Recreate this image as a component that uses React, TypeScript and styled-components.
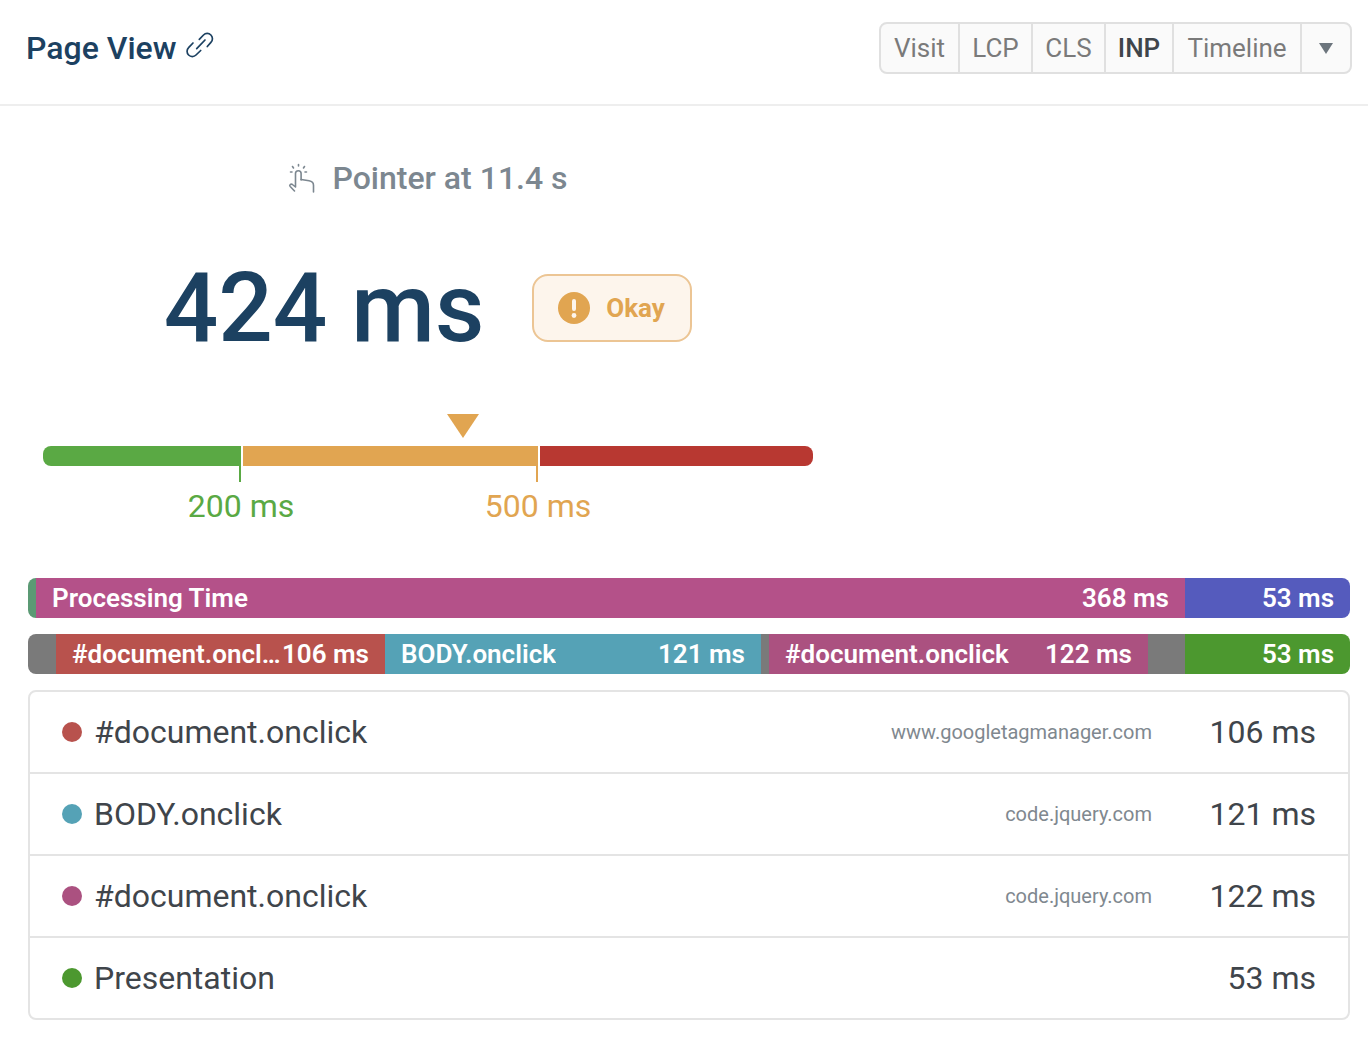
import React from "react";
import styled, { createGlobalStyle } from "styled-components";

const Global = createGlobalStyle`
  html, body { margin: 0; padding: 0; background: #fff; }
  body { font-family: Roboto, "Liberation Sans", sans-serif; -webkit-font-smoothing: antialiased; }
  * { box-sizing: border-box; }
`;

const Page = styled.div`
  width: 1368px;
  height: 1050px;
  background: #fff;
  overflow: hidden;
`;

const Header = styled.header`
  height: 106px;
  border-bottom: 2px solid #eeeeee;
  display: flex;
  align-items: center;
  justify-content: space-between;
  padding: 0 16px 8px 26px;
`;

const Title = styled.h1`
  margin: 0;
  display: flex;
  align-items: center;
  gap: 10px;
  font-size: 32px;
  font-weight: 500;
  line-height: 40px;
  color: #1c4161;
`;

const LinkIcon = styled.svg`
  width: 28px;
  height: 28px;
  margin-top: -6px;
  fill: none;
  stroke: #1c4161;
  stroke-width: 1.7;
  stroke-linecap: round;
  stroke-linejoin: round;
`;

const TabGroup = styled.div`
  display: flex;
  height: 52px;
  border: 2px solid #e0e0e0;
  border-radius: 8px;
  background: #fafafa;
`;

const Tab = styled.div<{ $active?: boolean; $width: number }>`
  width: ${(p) => p.$width}px;
  display: flex;
  align-items: center;
  justify-content: center;
  font-size: 26px;
  font-weight: ${(p) => (p.$active ? 500 : 400)};
  color: ${(p) => (p.$active ? "#3f454b" : "#7a7a7a")};
  border-right: 2px solid #e0e0e0;
  &:last-child { border-right: 0; }
`;

const Caret = styled.span`
  width: 0;
  height: 0;
  border-left: 7px solid transparent;
  border-right: 7px solid transparent;
  border-top: 11px solid #6c757d;
`;

const Summary = styled.section`
  width: 770px;
  margin-left: 43px;
  display: flex;
  flex-direction: column;
  align-items: center;
  padding-top: 52px;
`;

const Trigger = styled.div`
  display: flex;
  align-items: center;
  gap: 16px;
  height: 40px;
  font-size: 32px;
  font-weight: 500;
  color: #7c8790;
`;

const PointerIcon = styled.svg`
  width: 28px;
  height: 30px;
  fill: none;
  stroke: #7c8790;
  stroke-width: 1.6;
  stroke-linecap: round;
  stroke-linejoin: round;
`;

const ValueRow = styled.div`
  display: flex;
  align-items: center;
  gap: 48px;
  height: 96px;
  margin-top: 62px;
`;

const Value = styled.div`
  font-size: 96px;
  font-weight: 500;
  line-height: 96px;
  color: #1c4161;
`;

const Badge = styled.div`
  width: 160px;
  height: 68px;
  display: flex;
  align-items: center;
  gap: 16px;
  padding-left: 24px;
  border: 2px solid #ecc594;
  border-radius: 16px;
  background: #fdf5ec;
  font-size: 26px;
  font-weight: 700;
  color: #e1a551;
`;

const BadgeIcon = styled.svg`
  width: 32px;
  height: 32px;
  flex: none;
`;

const ScaleBlock = styled.div`
  width: 770px;
  margin-top: 58px;
`;

const Marker = styled.div`
  width: 0;
  height: 0;
  border-left: 16px solid transparent;
  border-right: 16px solid transparent;
  border-top: 24px solid #e1a551;
`;

const Scale = styled.div`
  display: flex;
  gap: 2px;
  height: 20px;
  margin-top: 8px;
  border-radius: 8px;
`;

const Zone = styled.div<{ $color: string; $width: number }>`
  position: relative;
  flex: ${(p) => (p.$width ? `0 0 ${p.$width}px` : "1")};
  background: ${(p) => p.$color};
  &:first-child { border-radius: 8px 0 0 8px; }
  &:last-child { border-radius: 0 8px 8px 0; }
`;

const Threshold = styled.div<{ $color: string }>`
  position: absolute;
  top: 100%;
  right: 0;
  width: 2px;
  height: 16px;
  background: ${(p) => p.$color};
`;

const ThresholdLabel = styled.div<{ $color: string }>`
  position: absolute;
  top: 40px;
  right: 0;
  transform: translateX(50%);
  font-size: 32px;
  line-height: 40px;
  white-space: nowrap;
  color: ${(p) => p.$color};
`;

const Bars = styled.section`
  margin: 112px 18px 0 28px;
  display: flex;
  flex-direction: column;
  gap: 16px;
`;

const Bar = styled.div`
  display: flex;
  height: 40px;
  border-radius: 8px;
  overflow: hidden;
`;

const Segment = styled.div<{ $color: string; $width: number }>`
  flex: 0 0 ${(p) => p.$width}px;
  min-width: 0;
  display: flex;
  align-items: center;
  justify-content: space-between;
  padding: ${(p) => (p.$width > 40 ? "0 16px" : "0")};
  background: ${(p) => p.$color};
  color: #fff;
  font-size: 26px;
  font-weight: 600;
  white-space: nowrap;
`;

const SegmentName = styled.span`
  min-width: 0;
  overflow: hidden;
  text-overflow: ellipsis;
`;

const SegmentTime = styled.span`
  margin-left: auto;
  flex: none;
`;

const Table = styled.div`
  margin: 16px 18px 0 28px;
  border: 2px solid #e4e4e4;
  border-radius: 8px;
`;

const Row = styled.div`
  height: 82px;
  display: flex;
  align-items: center;
  padding: 0 32px;
  border-bottom: 2px solid #e4e4e4;
  font-size: 32px;
  color: #3f454b;
  &:last-child { border-bottom: 0; height: 80px; }
`;

const Dot = styled.span<{ $color: string }>`
  width: 20px;
  height: 20px;
  border-radius: 50%;
  margin-right: 12px;
  flex: none;
  background: ${(p) => p.$color};
`;

const Name = styled.span`
  flex: 1;
`;

const Domain = styled.span`
  font-size: 20px;
  color: #80888f;
`;

const Time = styled.span`
  width: 164px;
  text-align: right;
`;

const segments1 = [
  { color: "#5b9a74", width: 8 },
  { color: "#b45189", width: 1149, name: "Processing Time", time: "368 ms" },
  { color: "#555bbd", width: 165, time: "53 ms" },
];

const segments2 = [
  { color: "#7a7a7a", width: 28 },
  { color: "#b8524d", width: 329, name: "#document.onclick", time: "106 ms" },
  { color: "#55a2b6", width: 376, name: "BODY.onclick", time: "121 ms" },
  { color: "#7a7a7a", width: 8 },
  { color: "#ab5180", width: 379, name: "#document.onclick", time: "122 ms" },
  { color: "#7a7a7a", width: 37 },
  { color: "#4c982f", width: 165, time: "53 ms" },
];

const rows = [
  { color: "#b8524d", name: "#document.onclick", domain: "www.googletagmanager.com", time: "106 ms" },
  { color: "#55a2b6", name: "BODY.onclick", domain: "code.jquery.com", time: "121 ms" },
  { color: "#ab5180", name: "#document.onclick", domain: "code.jquery.com", time: "122 ms" },
  { color: "#4c982f", name: "Presentation", domain: "", time: "53 ms" },
];

export default function App() {
  return (
    <Page>
      <Global />
      <Header>
        <Title>
          Page View
          <LinkIcon viewBox="0 0 28 28">
            <path d="M10.7 17.7L19 9" />
            <path d="M13.3 8.3L17.5 4a5.2 5.2 0 0 1 7.4 7.4L21.3 15.5" />
            <path d="M14.7 19.5L10 24a5.2 5.2 0 0 1-7.4-7.4L7 12" />
          </LinkIcon>
        </Title>
        <TabGroup>
          <Tab $width={79}>Visit</Tab>
          <Tab $width={73}>LCP</Tab>
          <Tab $width={73}>CLS</Tab>
          <Tab $width={68} $active>INP</Tab>
          <Tab $width={128}>Timeline</Tab>
          <Tab $width={48}><Caret /></Tab>
        </TabGroup>
      </Header>
      <Summary>
        <Trigger>
          <PointerIcon viewBox="0 0 28 30">
            <path d="M6.5 28L2.2 23.5c-1.2-1.4.6-3.2 2.2-2L7.5 24V10.5a2.8 2.8 0 0 1 5.6 0V17" />
            <path d="M13.1 16.5l8 1.3c3 .5 4.4 2 4.4 4.5V29" />
            <path d="M10.5 1.5V3M4.5 3.5L5.5 5M16.5 3.5L15.5 5M2.5 9H4M17 9h1.5" />
          </PointerIcon>
          Pointer at 11.4 s
        </Trigger>
        <ValueRow>
          <Value>424 ms</Value>
          <Badge>
            <BadgeIcon viewBox="0 0 32 32">
              <circle cx="16" cy="16" r="16" fill="#e1a551" />
              <rect x="14" y="7" width="4" height="12" rx="2" fill="#fdf5ec" />
              <circle cx="16" cy="23.5" r="2.4" fill="#fdf5ec" />
            </BadgeIcon>
            Okay
          </Badge>
        </ValueRow>
        <ScaleBlock>
          <Marker style={{ marginLeft: 404 }} />
          <Scale>
            <Zone $color="#5aa944" $width={198}>
              <Threshold $color="#5aa944" />
              <ThresholdLabel $color="#5aa944">200 ms</ThresholdLabel>
            </Zone>
            <Zone $color="#e1a551" $width={295}>
              <Threshold $color="#e1a551" />
              <ThresholdLabel $color="#e1a551">500 ms</ThresholdLabel>
            </Zone>
            <Zone $color="#b83831" $width={0} />
          </Scale>
        </ScaleBlock>
      </Summary>
      <Bars>
        <Bar>
          {segments1.map((s, i) => (
            <Segment key={i} $color={s.color} $width={s.width}>
              {s.name && <SegmentName>{s.name}</SegmentName>}
              {s.time && <SegmentTime>{s.time}</SegmentTime>}
            </Segment>
          ))}
        </Bar>
        <Bar>
          {segments2.map((s, i) => (
            <Segment key={i} $color={s.color} $width={s.width}>
              {s.name && <SegmentName>{s.name}</SegmentName>}
              {s.time && <SegmentTime>{s.time}</SegmentTime>}
            </Segment>
          ))}
        </Bar>
      </Bars>
      <Table>
        {rows.map((r, i) => (
          <Row key={i}>
            <Dot $color={r.color} />
            <Name>{r.name}</Name>
            {r.domain && <Domain>{r.domain}</Domain>}
            <Time>{r.time}</Time>
          </Row>
        ))}
      </Table>
    </Page>
  );
}
